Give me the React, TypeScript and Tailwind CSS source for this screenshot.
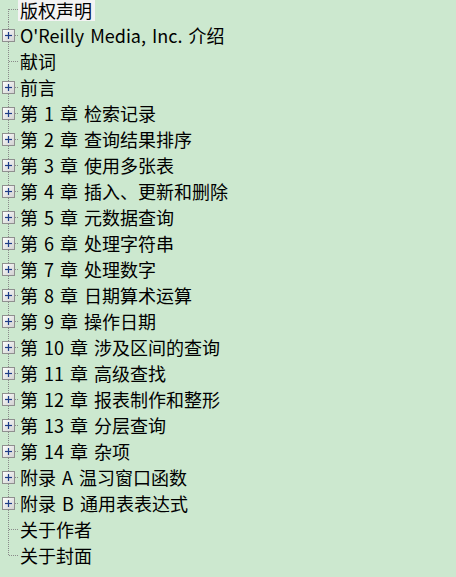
import React from 'react';

interface TreeItem {
  label: string;
  expandable: boolean;
  selected?: boolean;
}

const items: TreeItem[] = [
  { label: '版权声明', expandable: false, selected: true },
  { label: "O'Reilly Media, Inc. 介绍", expandable: true },
  { label: '献词', expandable: false },
  { label: '前言', expandable: true },
  { label: '第 1 章 检索记录', expandable: true },
  { label: '第 2 章 查询结果排序', expandable: true },
  { label: '第 3 章 使用多张表', expandable: true },
  { label: '第 4 章 插入、更新和删除', expandable: true },
  { label: '第 5 章 元数据查询', expandable: true },
  { label: '第 6 章 处理字符串', expandable: true },
  { label: '第 7 章 处理数字', expandable: true },
  { label: '第 8 章 日期算术运算', expandable: true },
  { label: '第 9 章 操作日期', expandable: true },
  { label: '第 10 章 涉及区间的查询', expandable: true },
  { label: '第 11 章 高级查找', expandable: true },
  { label: '第 12 章 报表制作和整形', expandable: true },
  { label: '第 13 章 分层查询', expandable: true },
  { label: '第 14 章 杂项', expandable: true },
  { label: '附录 A 温习窗口函数', expandable: true },
  { label: '附录 B 通用表表达式', expandable: true },
  { label: '关于作者', expandable: false },
  { label: '关于封面', expandable: false },
];

// tree guide lines + expander box for one row; first row is cropped 4px at the top
const Gutter: React.FC<{ first: boolean; last: boolean; expandable: boolean }> = ({ first, last, expandable }) => (
  <svg
    width="18"
    height={first ? 22 : 26}
    viewBox={first ? '0 4 18 22' : '0 0 18 26'}
    className="shrink-0"
  >
    <line
      x1="8.5"
      y1={first ? 13 : 0}
      x2="8.5"
      y2={last ? 13 : 26}
      stroke="#8a8a8a"
      strokeWidth="1"
      strokeDasharray="1 1"
    />
    <line x1="9" y1="13.5" x2="18" y2="13.5" stroke="#8a8a8a" strokeWidth="1" strokeDasharray="1 1" />
    {expandable && (
      <g>
        <defs>
          <linearGradient id="boxfill" x1="0" y1="0" x2="1" y2="1">
            <stop offset="0" stopColor="#ffffff" />
            <stop offset="1" stopColor="#d0d0d0" />
          </linearGradient>
        </defs>
        <rect x="2.5" y="7.5" width="12" height="12" fill="url(#boxfill)" stroke="#8f8f8f" />
        <line x1="5" y1="13.5" x2="12" y2="13.5" stroke="#1c3c88" strokeWidth="1.2" />
        <line x1="8.5" y1="10" x2="8.5" y2="17" stroke="#1c3c88" strokeWidth="1.2" />
      </g>
    )}
  </svg>
);

export default function App() {
  return (
    <div className="w-[456px] h-[577px] overflow-hidden bg-[#cce8cf] text-black font-['Noto_Sans_CJK_SC','Microsoft_YaHei',sans-serif]">
      <div className="flex flex-col">
        {items.map((item, i) => (
          <div key={i} className={`flex ${i === 0 ? 'h-[22px] items-start' : 'h-[26px] items-center'}`}>
            <Gutter first={i === 0} last={i === items.length - 1} expandable={item.expandable} />
            <span
              className={`h-[21px] leading-[21px] text-[18px] whitespace-nowrap [word-spacing:2px] pl-[2px] pr-[3px] ${
                item.selected ? 'bg-[#f3f3f3]' : ''
              }`}
            >
              {item.label}
            </span>
          </div>
        ))}
      </div>
    </div>
  );
}
